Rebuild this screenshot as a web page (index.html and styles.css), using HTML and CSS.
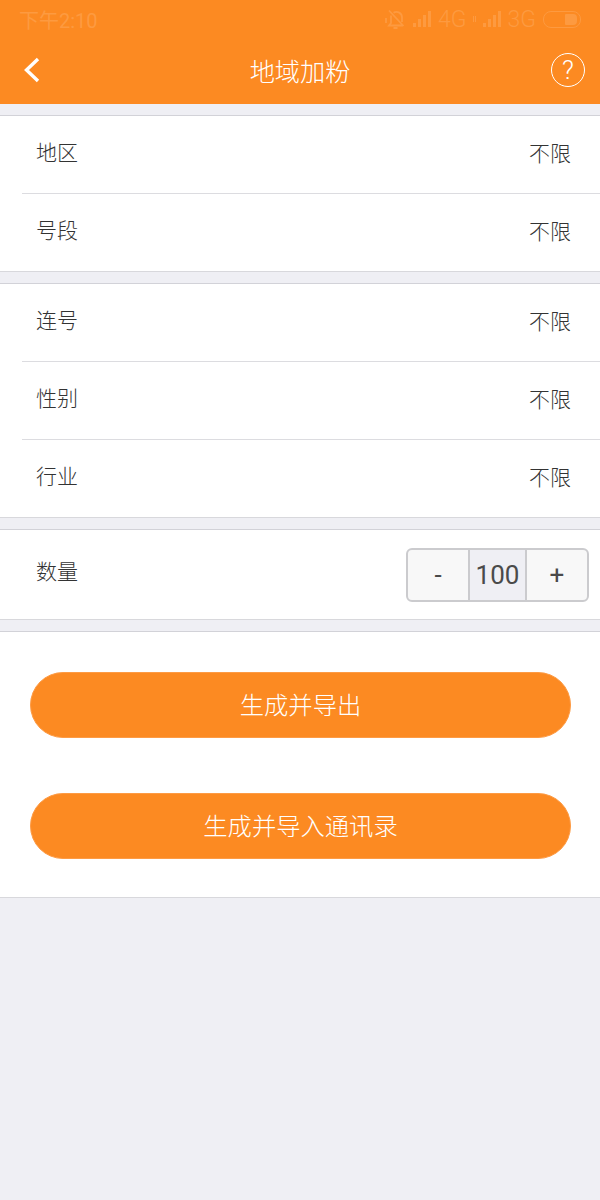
FILE: index.html
```html
<!DOCTYPE html>
<html lang="zh-CN">
<head>
    <meta charset="UTF-8">
    <meta name="viewport" content="width=device-width, initial-scale=1.0">
    <title>地域加粉</title>
    <link rel="stylesheet" href="styles.css">
</head>
<body>

    <header class="header">
        <!-- 状态栏 -->
        <div class="status-bar">
            <span class="status-time">下午2:10</span>
            <div class="status-icons">
                <svg class="icon-mute" width="21" height="20" viewBox="0 0 21 20" fill="none" stroke="currentColor" stroke-width="1.800">
                    <path d="M1 9v5M6 6.500V14l-2 2.500h14M17 13V8.500A5.500 5.500 0 0 0 8.500 3.800M8.500 19h4M4 1.500 18.500 17"/>
                </svg>
                <svg class="icon-signal" width="20" height="18" viewBox="0 0 20 18" fill="currentColor">
                    <path d="M1 13h3v4H1zM6 9h3v8H6zM11 5h3v12h-3zM16 1h3v16h-3z"/>
                </svg>
                <span class="status-net">4G</span>
                <svg class="icon-data" width="3" height="6" viewBox="0 0 3 6" fill="currentColor">
                    <path d="M0 0h1v6H0zM2 0h1v6H2z"/>
                </svg>
                <svg class="icon-signal" width="20" height="18" viewBox="0 0 20 18" fill="currentColor">
                    <path d="M1 13h3v4H1zM6 9h3v8H6zM11 5h3v12h-3zM16 1h3v16h-3z"/>
                </svg>
                <span class="status-net">3G</span>
                <div class="battery"><div class="battery-level"></div></div>
            </div>
        </div>
        <!-- 导航栏 -->
        <div class="nav-bar">
            <svg class="icon-back" width="18" height="26" viewBox="0 0 18 26" fill="none" stroke="#fff" stroke-width="3.400">
                <path d="M15 2 3.500 13 15 24"/>
            </svg>
            <h1 class="nav-title">地域加粉</h1>
            <div class="help-btn">?</div>
        </div>
    </header>

    <section class="group">
        <div class="row"><span>地区</span><span>不限</span></div>
        <div class="row"><span>号段</span><span>不限</span></div>
    </section>

    <section class="group">
        <div class="row"><span>连号</span><span>不限</span></div>
        <div class="row"><span>性别</span><span>不限</span></div>
        <div class="row"><span>行业</span><span>不限</span></div>
    </section>

    <section class="group">
        <div class="row-count">
            <span class="count-label">数量</span>
            <div class="stepper">
                <div class="step-btn">-</div>
                <div class="step-value">100</div>
                <div class="step-btn">+</div>
            </div>
        </div>
    </section>

    <section class="group actions">
        <button class="button">生成并导出</button>
        <button class="button">生成并导入通讯录</button>
    </section>

</body>
</html>
```

FILE: styles.css
```css
* {
    box-sizing: border-box;
}
body {
    margin: 0;
    height: 1200px;
    overflow: hidden;
    background-color: #efeff4;
    font-family: "Liberation Sans", "Noto Sans CJK SC", sans-serif;
    font-weight: 300;
    color: #333;
}
.header {
    height: 104px;
    background-color: #fc8a22;
    color: #fff;
}
.status-bar {
    height: 38px;
    padding: 0 19px;
    display: flex;
    justify-content: space-between;
    align-items: center;
    color: #fd9a40;
    font-size: 20px;
    font-weight: 400;
    font-family: "Roboto", "Noto Sans CJK SC", sans-serif;
}
.status-icons {
    display: flex;
    align-items: center;
    gap: 6px;
}
.status-net {
    font-size: 23px;
    font-weight: 300;
}
.battery {
    width: 38px;
    height: 17px;
    margin-left: 1px;
    border: 1.500px solid currentColor;
    border-radius: 8px;
    display: flex;
    justify-content: flex-end;
    padding: 2px 3px;
}
.battery-level {
    width: 12px;
    background-color: currentColor;
    border-radius: 1px 4px 4px 1px;
}
.nav-bar {
    height: 66px;
    padding: 0 15px 3px 23px;
    display: flex;
    justify-content: space-between;
    align-items: center;
    position: relative;
}
.nav-title {
    margin: 0;
    position: absolute;
    left: 0;
    right: 0;
    text-align: center;
    font-size: 25.200px;
    font-weight: 300;
}
.help-btn {
    width: 34px;
    height: 34px;
    border: 1.500px solid #fff;
    border-radius: 50%;
    display: flex;
    justify-content: center;
    align-items: center;
    font-size: 26px;
    font-family: "Roboto", sans-serif;
    font-weight: 300;
}
.group {
    margin-top: 11px;
    background-color: #fff;
    border-top: 1px solid #d2d2d8;
    border-bottom: 1px solid #d8d8dc;
}
.row {
    height: 78px;
    margin-left: 22px;
    padding: 0 29px 6px 14px;
    display: flex;
    justify-content: space-between;
    align-items: center;
    font-size: 21px;
    border-bottom: 1px solid #dcdce0;
}
.row span:first-child {
    margin-bottom: 2px;
}
.row:last-child {
    border-bottom: none;
    height: 77px;
}
.row-count {
    height: 89px;
    padding: 0 11px 0 36px;
    display: flex;
    justify-content: space-between;
    align-items: center;
    font-size: 21px;
}
.count-label {
    margin-bottom: 10px;
}
.stepper {
    width: 183px;
    height: 54px;
    margin-top: 1px;
    display: flex;
    border: 2px solid #cbcbce;
    border-radius: 6px;
    background-color: #f8f8f8;
    overflow: hidden;
    font-family: "Roboto", sans-serif;
    font-size: 26px;
    font-weight: 400;
    color: #4a4a4a;
}
.step-btn {
    flex: 1;
    display: flex;
    justify-content: center;
    align-items: center;
}
.step-value {
    width: 59px;
    display: flex;
    justify-content: center;
    align-items: center;
    background-color: #efeff4;
    border-left: 2px solid #cbcbce;
    border-right: 2px solid #cbcbce;
}
.actions {
    height: 267px;
    padding: 40px 29px 0 30px;
    display: flex;
    flex-direction: column;
    gap: 55px;
}
.button {
    height: 66px;
    padding: 0 0 4px;
    border: 1px solid #fd9b45;
    border-radius: 33px;
    background-color: #fc8a22;
    color: #fff;
    font-family: inherit;
    font-weight: 300;
    font-size: 24.300px;
}
```
